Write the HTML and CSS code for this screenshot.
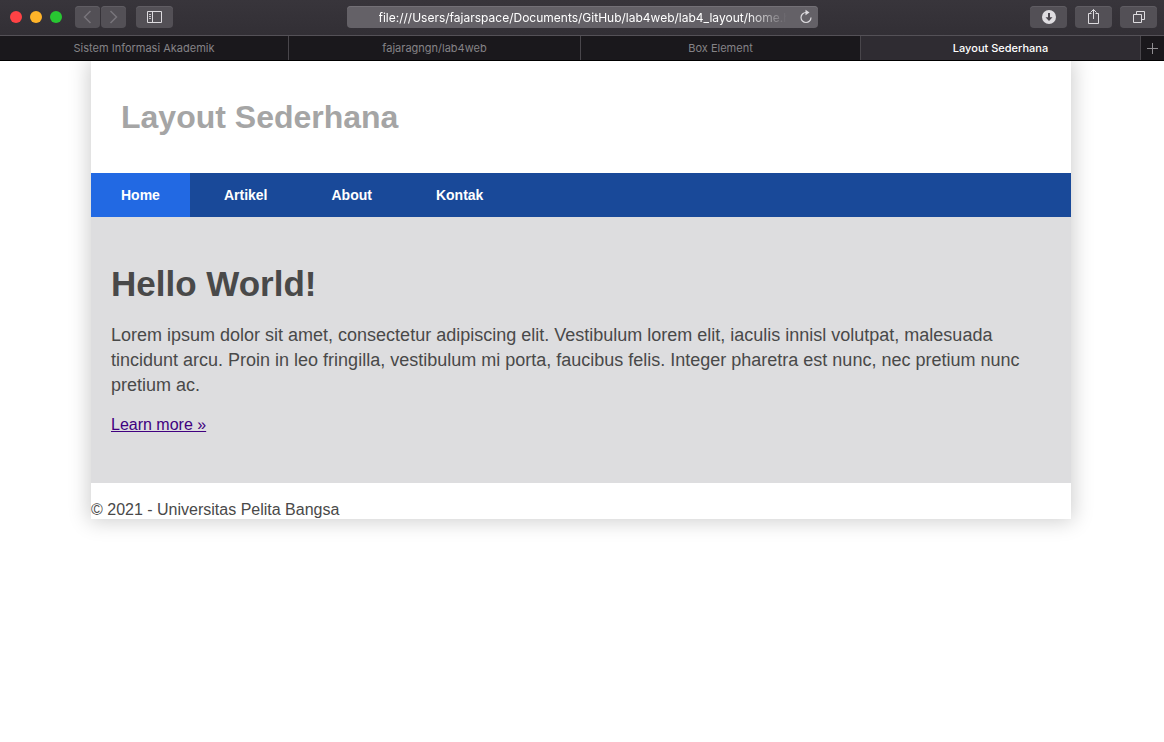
FILE: index.html
```html
<!DOCTYPE html>
<html lang="id">
<head>
<meta charset="utf-8">
<title>Layout Sederhana</title>
<link rel="stylesheet" href="styles.css">
</head>
<body>
<div class="browser">
  <div class="toolbar">
    <div class="toolbar-left">
      <div class="lights"><span class="light light-red"></span><span class="light light-yellow"></span><span class="light light-green"></span></div>
      <div class="history">
        <button class="tool tool-small" type="button" aria-label="Back"><svg width="26" height="22" viewBox="0 0 26 22"><path d="M15.500 5 9.500 11l6 6" fill="none" stroke="#78757b" stroke-width="1.500"/></svg></button>
        <button class="tool tool-small" type="button" aria-label="Forward"><svg width="26" height="22" viewBox="0 0 26 22"><path d="m9.500 5 6 6-6 6" fill="none" stroke="#78757b" stroke-width="1.500"/></svg></button>
      </div>
      <button class="tool" type="button" aria-label="Sidebar"><svg width="37" height="22" viewBox="0 0 37 22"><path d="M11.500 5.500h14v11h-14zM16.500 5.500v11" fill="none" stroke="#dddbdf"/><path d="M13 8.500h2M13 10.500h2M13 12.500h2" stroke="#c4c2c6"/></svg></button>
    </div>
    <div class="address">
      <input class="address-input" type="text" aria-label="Address" value="file:///Users/fajarspace/Documents/GitHub/lab4web/lab4_layout/home.html">
      <button class="reload" type="button" aria-label="Reload"><svg width="14" height="16" viewBox="0 0 14 16"><path d="M7 3.500a5 5 0 1 0 5 5" fill="none" stroke="#dddbdf" stroke-width="1.200"/><path d="M6.500.700 10.500 3.500l-4 2.800z" fill="#dddbdf"/></svg></button>
    </div>
    <div class="toolbar-right">
      <button class="tool" type="button" aria-label="Downloads"><svg width="37" height="22" viewBox="0 0 37 22"><circle cx="19" cy="11" r="7" fill="#dfdde1"/><path d="M19 7v6" stroke="#4b474e" stroke-width="2"/><path d="M15.500 11.200h7L19 15z" fill="#4b474e"/></svg></button>
      <button class="tool" type="button" aria-label="Share"><svg width="37" height="22" viewBox="0 0 37 22"><path d="M16.500 7.500h-3v10h10v-10h-3M18.500 13V3.500M15.500 6.500l3-3 3 3" fill="none" stroke="#dddbdf"/></svg></button>
      <button class="tool" type="button" aria-label="Tabs"><svg width="37" height="22" viewBox="0 0 37 22"><path d="M13.500 8.500h8v8h-8zM16.500 8.500v-3h8v8h-3" fill="none" stroke="#dddbdf"/></svg></button>
    </div>
  </div>
  <div class="tabs">
    <button class="tab" type="button">Sistem Informasi Akademik</button>
    <button class="tab" type="button">fajaragngn/lab4web</button>
    <button class="tab" type="button">Box Element</button>
    <button class="tab tab-active" type="button">Layout Sederhana</button>
    <button class="tab-new" type="button" aria-label="New tab"><svg width="11" height="11" viewBox="0 0 11 11"><path d="M0 5.500h11M5.500 0v11" stroke="#908e92"/></svg></button>
  </div>
</div>
<div class="page">
  <div class="container">
    <header class="header"><h1 class="site-title">Layout Sederhana</h1></header>
    <nav class="nav">
      <a class="nav-link nav-active" href="#home">Home</a>
      <a class="nav-link" href="#artikel">Artikel</a>
      <a class="nav-link" href="#about">About</a>
      <a class="nav-link" href="#kontak">Kontak</a>
    </nav>
    <section class="hero">
      <h1 class="hero-title">Hello World!</h1>
      <p class="hero-text">Lorem ipsum dolor sit amet, consectetur adipiscing elit. Vestibulum lorem elit, iaculis innisl volutpat, malesuada tincidunt arcu. Proin in leo fringilla, vestibulum mi porta, faucibus felis. Integer pharetra est nunc, nec pretium nunc pretium ac.</p>
      <a class="hero-link" href="#more">Learn more »</a>
    </section>
    <footer class="footer"><p class="copyright">© 2021 - Universitas Pelita Bangsa</p></footer>
  </div>
</div>
</body>
</html>
```
FILE: styles.css
```css
* { box-sizing: border-box; }
body {
  margin: 0;
  min-height: 100vh;
  background: #fff;
  color: #494949;
  font-family: "Liberation Sans", Arial, sans-serif;
  font-size: 16px;
  line-height: 18px;
}
button { margin: 0; padding: 0; border: 0; background: none; font: inherit; }
svg { display: block; }

.browser {
  position: relative;
  z-index: 1;
  background: #353238;
  border-bottom: 1px solid #000;
  font-family: Inter, sans-serif;
}
.toolbar {
  display: grid;
  grid-template-columns: 1fr 471px 1fr;
  align-items: center;
  height: 35px;
  padding: 0 7px 1px;
  background: linear-gradient(#38353b, #322f35);
}
.toolbar-left, .toolbar-right, .lights, .history { display: flex; align-items: center; }
.toolbar-right { justify-content: flex-end; gap: 8px; }
.lights { gap: 8px; margin: 0 13px 0 3px; }
.light { width: 12px; height: 12px; border-radius: 50%; }
.light-red { background: #ff4245; }
.light-yellow { background: #ffb429; }
.light-green { background: #28c732; }
.history { gap: 1px; margin-right: 10px; }
.tool {
  width: 37px;
  height: 22px;
  border-radius: 4px;
  background: #535056;
  box-shadow: inset 0 1px #605d63;
  overflow: hidden;
}
.tool-small { width: 25px; }
.address {
  display: flex;
  align-items: center;
  height: 22px;
  padding: 0 5px 0 32px;
  border-radius: 4px;
  background: #646167;
  box-shadow: inset 0 1px #737076;
}
.address-input {
  flex: 1;
  min-width: 0;
  height: 22px;
  margin-right: 12px;
  padding: 0;
  border: 0;
  outline: 0;
  background: none;
  color: #fff;
  font: 12px Inter, sans-serif;
  -webkit-mask-image: linear-gradient(to right, #000 calc(100% - 40px), transparent);
  mask-image: linear-gradient(to right, #000 calc(100% - 40px), transparent);
}
.tabs {
  display: grid;
  grid-template-columns: 289fr 292fr 280fr 280fr 23px;
  height: 25px;
  border-top: 1px solid #545157;
}
.tab, .tab-new {
  background: #1a181c;
  color: #858387;
  font-size: 11px;
}
.tab { border-right: 1px solid #49464b; }
.tab-active { background: #2f2c32; color: #fff; font-weight: 500; }
.tab-new { display: grid; place-items: center; }

.page { padding: 0 2px 40px 0; }
.container {
  max-width: 980px;
  margin: 0 auto;
  background: #fff;
  box-shadow: 0 0 20px 2px rgba(0, 0, 0, 0.2);
}
.header { padding: 36px 30px; }
.site-title { margin: 0; color: #a5a5a5; font-size: 32px; line-height: 40px; }
.nav { display: flex; gap: 4px; background: #194999; }
.nav-link {
  padding: 13px 30px;
  color: #fff;
  font-size: 14px;
  font-weight: bold;
  text-decoration: none;
}
.nav-active { background: #2269e3; }
.hero { padding: 46px 20px 49px; background: #dddddf; }
.hero-title { margin: 0 0 18px; font-size: 35px; line-height: 42px; }
.hero-text { margin: 0 0 18px; font-size: 18px; line-height: 25px; }
.hero-link { color: #400080; }
.footer { padding-top: 18px; }
.copyright { margin: 0; }
```
